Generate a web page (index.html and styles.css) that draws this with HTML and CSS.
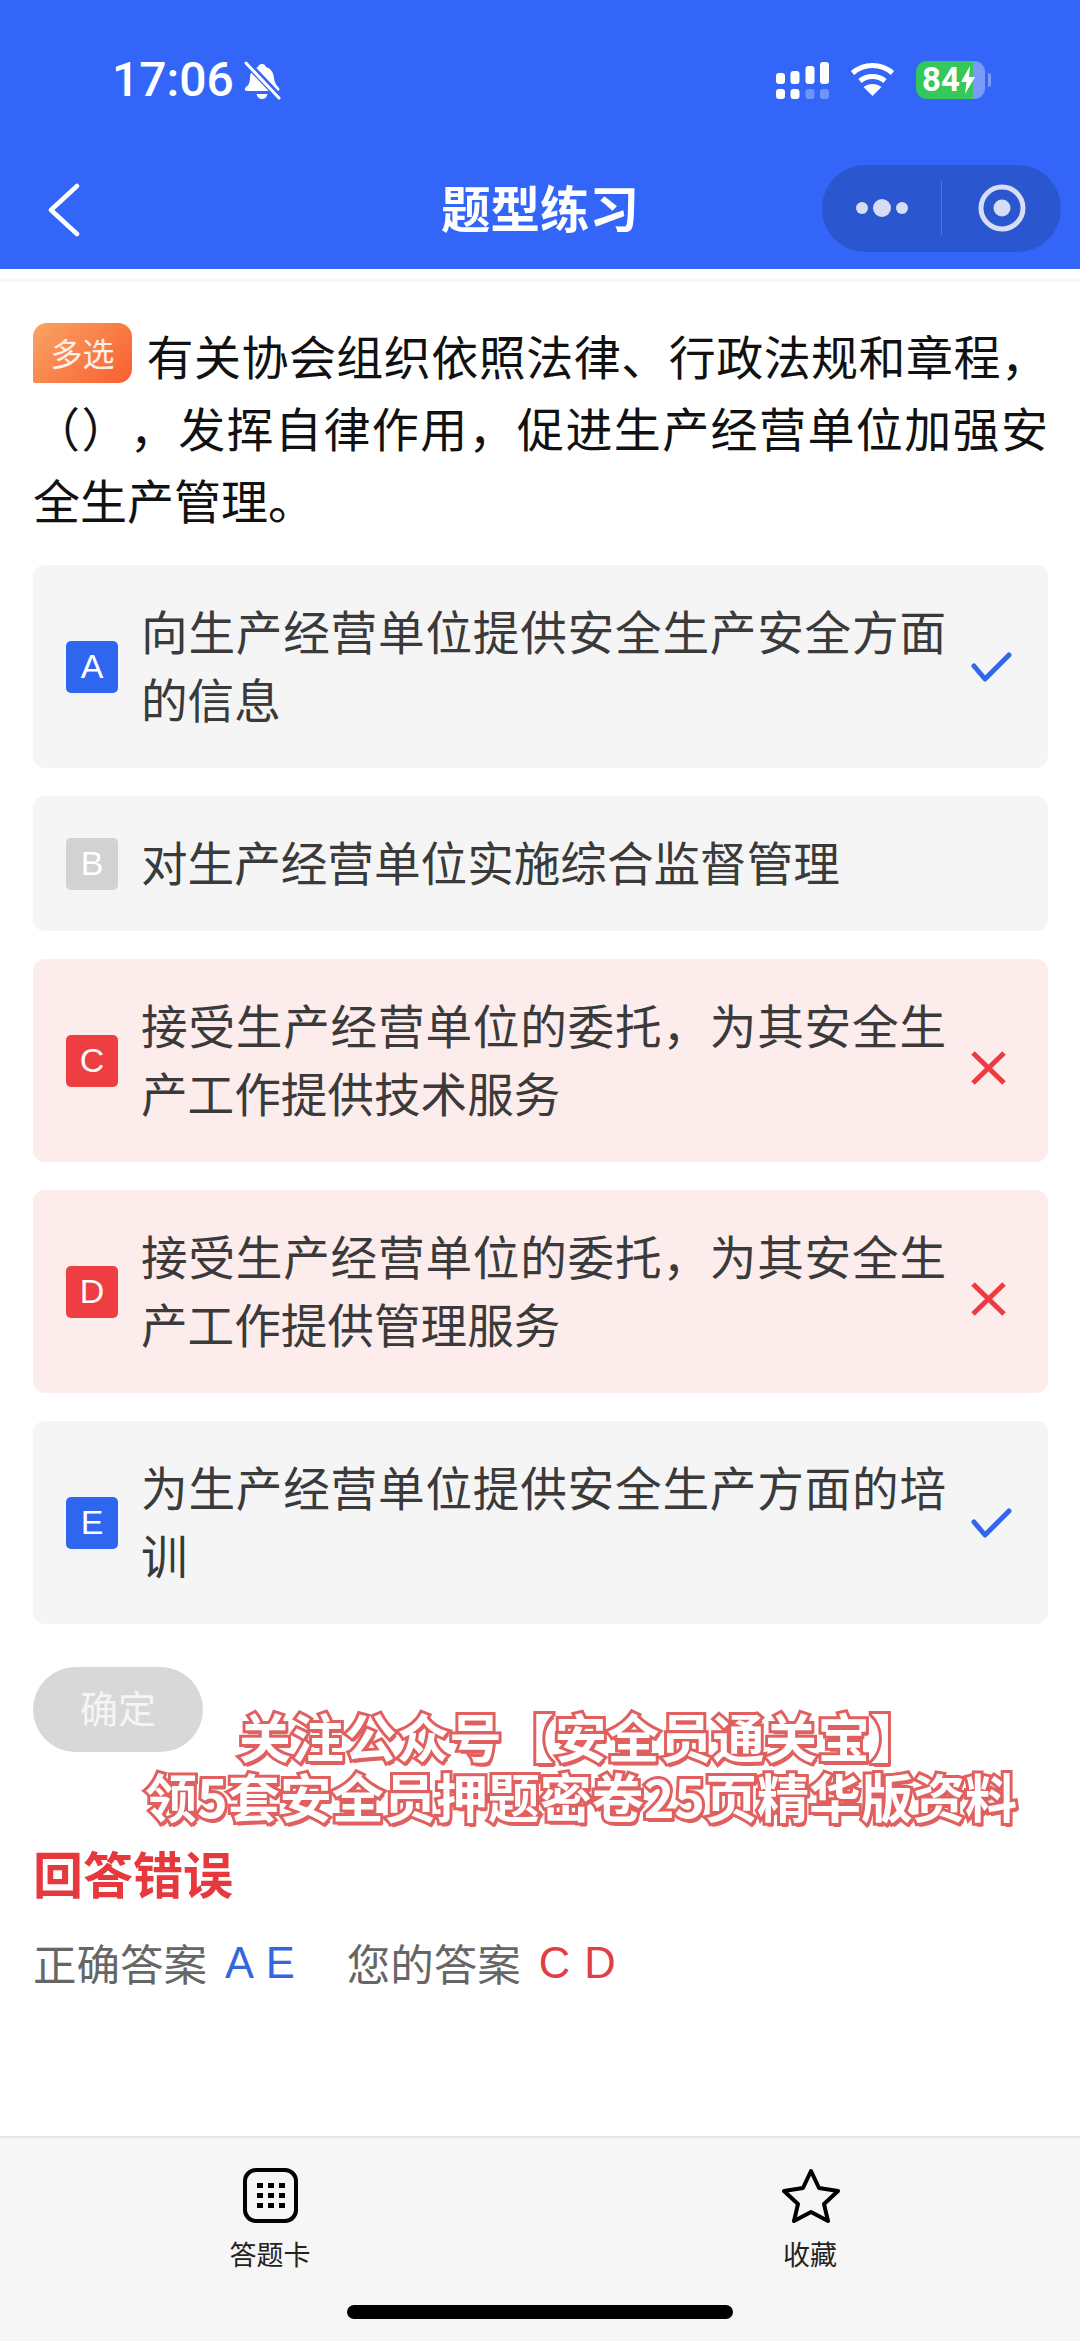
FILE: index.html
```html
<!DOCTYPE html>
<html lang="zh-CN">
<head>
    <meta charset="UTF-8">
    <meta name="viewport" content="width=device-width, initial-scale=1.0">
    <title>题型练习</title>
    <link rel="stylesheet" href="styles.css">
</head>
<body>
    <div class="page">
        <header class="top">
            <div class="status">
                <div class="status-left">
                    <span class="time">17:06</span>
                    <svg class="bell" width="37" height="40" viewBox="0 0 37 40">
                        <path fill="#fff" d="M18 3c2 0 3.500 1 4 3 5 1.500 7.500 5.500 8 11 .4 4.500 2 7 5 10 1 1.500.5 3-1.500 3H3c-2 0-3-1.500-1.500-3.500C5 24 6 21 6 17c0-5.500 3.500-9.500 8-11 .5-2 2-3 4-3z"/>
                        <path fill="#fff" d="M12.500 33h11c-.5 3-2.800 5-5.500 5s-5-2-5.500-5z"/>
                        <path stroke="#3366f8" stroke-width="7" d="M1 0l36 38"/>
                        <path stroke="#fff" stroke-width="3" stroke-linecap="round" d="M2 2l33 35"/>
                    </svg>
                </div>
                <div class="status-right">
                    <svg width="53" height="37" viewBox="0 0 53 37" fill="#fff">
                        <rect x="0" y="11" width="9" height="11" rx="3"/>
                        <rect x="14.500" y="9" width="9" height="13" rx="3"/>
                        <rect x="29.500" y="4" width="9" height="18" rx="3"/>
                        <rect x="44" y="0" width="9" height="22" rx="3"/>
                        <rect x="0" y="27" width="9" height="10" rx="3"/>
                        <rect x="14.500" y="27" width="9" height="10" rx="3"/>
                        <rect x="29.500" y="27" width="9" height="10" rx="3" opacity=".3"/>
                        <rect x="44" y="27" width="9" height="10" rx="3" opacity=".3"/>
                    </svg>
                    <svg width="45" height="34" viewBox="0 0 45 34" fill="none" stroke="#fff" stroke-width="5">
                        <path d="M2.500 11C14 1 31 1 42.500 11"/>
                        <path d="M10 19C17 13 28 13 35 19"/>
                        <path fill="#fff" stroke="none" d="M22.500 34L13.500 25C19 21 26 21 31.500 25z"/>
                    </svg>
                    <div class="battery-wrap">
                        <div class="battery">
                            <span>84</span>
                            <svg width="14" height="28" viewBox="0 0 14 28"><path fill="#fff" d="M9 0L0 16h5.500L4 28l10-17H8z"/></svg>
                        </div>
                        <span class="battery-nub"></span>
                    </div>
                </div>
            </div>
            <nav class="navbar">
                <svg class="back" width="32" height="54" viewBox="0 0 32 54" fill="none" stroke="#fff" stroke-width="4.500" stroke-linecap="round" stroke-linejoin="round">
                    <path d="M29 3L3 27l26 24" />
                </svg>
                <h1 class="title">题型练习</h1>
                <div class="capsule">
                    <div class="capsule-part">
                        <svg width="60" height="20" viewBox="0 0 60 20" fill="#d5def5">
                            <circle cx="10" cy="10" r="6"/>
                            <circle cx="30" cy="10" r="9"/>
                            <circle cx="50" cy="10" r="6"/>
                        </svg>
                    </div>
                    <span class="capsule-line"></span>
                    <div class="capsule-part">
                        <svg width="48" height="48" viewBox="0 0 48 48">
                            <circle cx="24" cy="24" r="21" fill="none" stroke="#d5def5" stroke-width="5"/>
                            <circle cx="24" cy="24" r="8.500" fill="#d5def5"/>
                        </svg>
                    </div>
                </div>
            </nav>
        </header>
        <div class="top-gap"></div>

        <main class="content">
            <p class="question"><span class="tag">多选</span>有关协会组织依照法律、行政法规和章程，（），发挥自律作用，促进生产经营单位加强安全生产管理。</p>

            <div class="options">
                <div class="option">
                    <span class="letter blue">A</span>
                    <span class="option-text">向生产经营单位提供安全生产安全方面的信息</span>
                    <svg class="mark" width="41" height="30" viewBox="0 0 41 30" fill="none" stroke="#3366e8" stroke-width="5" stroke-linecap="round" stroke-linejoin="round"><path d="M3 14l11 13L38 3"/></svg>
                </div>
                <div class="option">
                    <span class="letter grey">B</span>
                    <span class="option-text">对生产经营单位实施综合监督管理</span>
                </div>
                <div class="option wrong">
                    <span class="letter red">C</span>
                    <span class="option-text">接受生产经营单位的委托，为其安全生产工作提供技术服务</span>
                    <svg class="mark cross" width="41" height="34" viewBox="0 0 41 34" fill="none" stroke="#ee3b3f" stroke-width="5"><path d="M2 2l31 30M33 2L2 32"/></svg>
                </div>
                <div class="option wrong">
                    <span class="letter red">D</span>
                    <span class="option-text">接受生产经营单位的委托，为其安全生产工作提供管理服务</span>
                    <svg class="mark cross" width="41" height="34" viewBox="0 0 41 34" fill="none" stroke="#ee3b3f" stroke-width="5"><path d="M2 2l31 30M33 2L2 32"/></svg>
                </div>
                <div class="option">
                    <span class="letter blue">E</span>
                    <span class="option-text">为生产经营单位提供安全生产方面的培训</span>
                    <svg class="mark" width="41" height="30" viewBox="0 0 41 30" fill="none" stroke="#3366e8" stroke-width="5" stroke-linecap="round" stroke-linejoin="round"><path d="M3 14l11 13L38 3"/></svg>
                </div>
            </div>

            <button class="confirm" type="button">确定</button>

            <div class="result-title">回答错误</div>
            <div class="result-row">
                <span>正确答案</span>
                <span class="answer right-answer">A E</span>
                <span class="second">您的答案</span>
                <span class="answer my-answer">C D</span>
            </div>
        </main>

        <div class="watermark">
            <div class="watermark-first">关注公众号【安全员通关宝】</div>
            <div>领5套安全员押题密卷25页精华版资料</div>
        </div>

        <footer class="bottom">
            <div class="tabs">
                <div class="tab">
                    <svg width="55" height="55" viewBox="0 0 55 55">
                        <rect x="2" y="2" width="51" height="51" rx="11" fill="none" stroke="#000" stroke-width="4"/>
                        <g fill="#000">
                            <rect x="14" y="15" width="6" height="5"/><rect x="25" y="15" width="6" height="5"/><rect x="36" y="15" width="6" height="5"/>
                            <rect x="14" y="25" width="6" height="5"/><rect x="25" y="25" width="6" height="5"/><rect x="36" y="25" width="6" height="5"/>
                            <rect x="14" y="35" width="6" height="5"/><rect x="25" y="35" width="6" height="5"/><rect x="36" y="35" width="6" height="5"/>
                        </g>
                    </svg>
                    <span class="tab-label">答题卡</span>
                </div>
                <div class="tab">
                    <svg class="star" width="58" height="55" viewBox="0 0 58 55">
                        <path fill="none" stroke="#000" stroke-width="4" stroke-linejoin="round" d="M29 3l8 17 19 3-14 13 4 17-17-9-17 9 4-17L2 23l19-3z"/>
                    </svg>
                    <span class="tab-label">收藏</span>
                </div>
            </div>
            <div class="home-bar"></div>
        </footer>
    </div>
</body>
</html>
```
FILE: styles.css
```css
* { box-sizing: border-box; }
html, body { margin: 0; padding: 0; }
body { font-family: "Noto Sans CJK SC", "Noto Sans", sans-serif; background-color: #fff; color: #111; }
svg { display: block; flex-shrink: 0; }

.page { position: relative; display: flex; flex-direction: column; width: 1080px; height: 2341px; overflow: hidden; }

.top { height: 269px; background-color: #3366f8; color: #fff; }
.status { display: flex; justify-content: space-between; height: 147px; padding: 60px 89px 0 112px; }
.status-left { display: flex; align-items: flex-start; gap: 10px; }
.time { font-family: Roboto, sans-serif; font-size: 48px; font-weight: 500; line-height: 40px; }
.bell { margin-top: 1px; }
.status-right { display: flex; align-items: flex-start; gap: 21px; padding-top: 2px; }
.battery-wrap { display: flex; align-items: center; gap: 3px; margin-top: -1px; }
.battery { display: flex; align-items: center; justify-content: flex-start; gap: 1px; width: 69px; height: 38px; padding-left: 6px; border-radius: 11px; background: linear-gradient(to right, #34c759 0, #34c759 57px, rgba(255,255,255,0.35) 57px); font-family: Roboto, sans-serif; font-size: 33px; font-weight: 700; line-height: 38px; }
.battery-nub { width: 3px; height: 14px; border-radius: 0 3px 3px 0; background-color: rgba(255,255,255,0.35); }

.navbar { display: grid; grid-template-columns: 1fr auto 1fr; align-items: center; height: 122px; padding: 0 19px 0 48px; }
.title { margin: 0 0 2px -29px; font-size: 49.500px; font-weight: 700; line-height: 60px; }
.back { margin-top: 4px; }
.capsule { display: flex; align-items: center; justify-self: end; width: 239px; height: 87px; border-radius: 44px; background-color: #2a56cf; }
.capsule-part { display: flex; flex: 1; align-items: center; justify-content: center; }
.capsule-line { width: 1px; height: 54px; background-color: rgba(255,255,255,0.18); }

.top-gap { height: 13px; border-bottom: 3px solid #f7f7f7; }

.content { flex: 1; padding: 37px 32px 0 33px; }
.question { margin: 0; font-size: 47px; line-height: 72px; text-align: justify; text-spacing-trim: space-all; }
.tag { display: inline-block; width: 99px; height: 60px; margin-right: 14px; border-radius: 14px 14px 14px 2px; background: linear-gradient(135deg, #f9a465, #f95e2e); color: #fdf1ea; font-size: 32px; line-height: 58px; text-align: center; vertical-align: 9px; }

.options { display: flex; flex-direction: column; gap: 28px; margin-top: 30px; }
.option { display: flex; align-items: center; padding: 31px 36px 36px 33px; border-radius: 12px; background-color: #f5f5f5; color: #3a3a3a; }
.option.wrong { background-color: #fdecec; }
.letter { display: flex; flex-shrink: 0; align-items: center; justify-content: center; width: 52px; height: 52px; margin-top: 5px; margin-right: 23px; border-radius: 5px; color: #fff; font-family: "Liberation Sans", sans-serif; font-size: 34px; }
.letter.blue { background-color: #2f66f0; }
.letter.grey { background-color: #d2d2d2; }
.letter.red { background-color: #ef3e42; }
.option-text { flex: 1; font-size: 46.600px; line-height: 68px; text-align: justify; }
.mark { width: 41px; margin-top: 5px; margin-left: 25px; }
.mark.cross { margin-top: 19px; }

.confirm { display: block; width: 170px; height: 85px; margin-top: 43px; padding: 0 0 6px; border: none; border-radius: 43px; background-color: #d8d8d8; color: #f5f5f5; font-family: inherit; font-size: 38px; }

.result-title { margin-top: 90px; color: #e5393e; font-size: 50px; font-weight: 700; line-height: 60px; }
.result-row { display: flex; gap: 18px; margin-top: 31px; color: #666; font-size: 43.500px; line-height: 60px; }
.answer { font-family: "Liberation Sans", sans-serif; word-spacing: 2px; }
.right-answer { color: #3366e0; }
.my-answer { color: #e04044; }
.second { margin-left: 34px; }

.watermark { position: absolute; top: 1706px; left: 140px; width: 882px; color: #fff; font-size: 52px; font-weight: 700; line-height: 60px; text-align: center; white-space: nowrap; -webkit-text-stroke: 6px #e0605f; paint-order: stroke fill; text-shadow: 2px 4px 0 #e0605f; }
.watermark-first { letter-spacing: 0.600px; }

.bottom { height: 205px; border-top: 2px solid #e5e5e5; background-color: #f6f6f6; }
.tabs { display: flex; padding-top: 30px; }
.tab { display: flex; flex: 1; flex-direction: column; align-items: center; }
.star { margin-left: 2px; }
.tab-label { margin-top: 13px; color: #222; font-size: 27px; line-height: 36px; }
.home-bar { width: 386px; height: 14px; margin: 33px auto 0; border-radius: 7px; background-color: #000; }
```
